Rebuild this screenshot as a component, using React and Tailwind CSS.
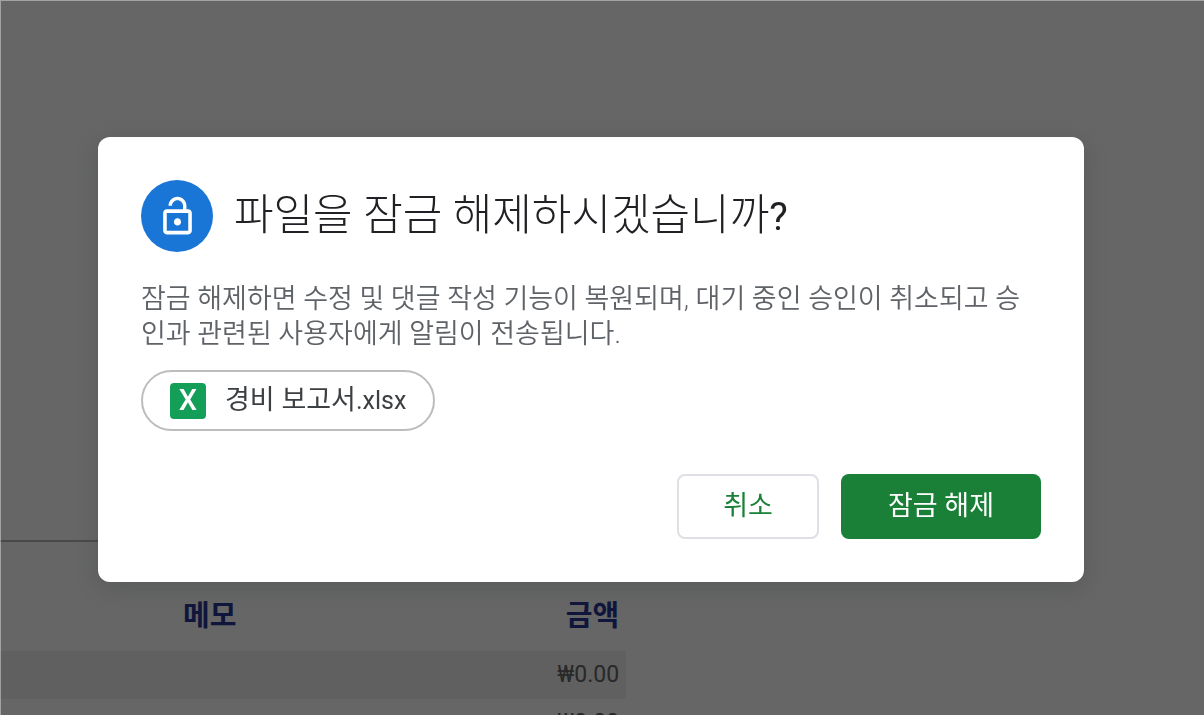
import { MdLockOpen } from 'react-icons/md';

const rows = ['₩0.00', '₩0.00'];

function ExpenseTable() {
  return (
    <main className="h-screen overflow-hidden bg-white pt-[540px]">
      <table className="w-[52%] border-collapse border-t-2 border-[#b7b7b7]">
        <thead>
          <tr className="h-[110px] text-[29px] font-bold text-[#283593]">
            <th className="pt-10 pl-[183px] text-left">메모</th>
            <th className="pt-10 pr-[7px] text-right">금액</th>
          </tr>
        </thead>
        <tbody>
          {rows.map((amount, i) => (
            <tr key={i} className="h-12 text-[23px] leading-8 text-[#666666] odd:bg-[#efefef]">
              <td></td>
              <td className="pr-[7px] text-right">{amount}</td>
            </tr>
          ))}
        </tbody>
      </table>
    </main>
  );
}

function UnlockDialog() {
  return (
    <div className="fixed inset-0 flex items-start border-t border-l border-white/40 bg-black/60 pt-[136px] pr-[120px] pl-[97px]">
      <section
        role="dialog"
        aria-modal="true"
        aria-labelledby="dialog-title"
        className="w-full rounded-xl bg-white p-[43px] shadow-[0_6px_24px_2px_rgba(60,64,67,0.3)]"
      >
        <header className="flex items-center gap-[21px]">
          <div className="flex size-[72px] shrink-0 items-center justify-center rounded-full bg-[#1976d7] text-white">
            <MdLockOpen size={43} />
          </div>
          <h1 id="dialog-title" className="text-[43px] leading-[60px] font-light text-[#202124]">
            파일을 잠금 해제하시겠습니까<span className="text-[39px] font-normal">?</span>
          </h1>
        </header>

        <p className="mt-[30px] text-[27px] leading-[35px] font-[350] text-[#5f6368]">
          잠금 해제하면 수정 및 댓글 작성 기능이 복원되며, 대기 중인 승인이 취소되고 승인과 관련된 사용자에게 알림이 전송됩니다.
        </p>

        <div className="mt-[18px] flex h-[61px] w-fit items-center gap-[19px] rounded-full border-2 border-[#bdbdbd] px-[27px]">
          <span className="flex size-9 items-center justify-center rounded bg-[#149f58] text-[29px] font-medium text-white">X</span>
          <span className="text-[27px] leading-[35px] text-[#3c4043]">
            경비 보고서<span className="text-[25px]">.xlsx</span>
          </span>
        </div>

        <footer className="mt-[43px] flex justify-end gap-[22px]">
          <button className="h-[65px] rounded-lg border-2 border-[#dfe0e6] px-11 text-[27px] text-[#1a8038]">취소</button>
          <button className="h-[65px] rounded-lg bg-[#1a8038] px-[47px] text-[27px] text-white">잠금 해제</button>
        </footer>
      </section>
    </div>
  );
}

export default function App() {
  return (
    <div lang="ko" className="font-[Roboto,'Noto_Sans_CJK_KR',sans-serif]">
      <ExpenseTable />
      <UnlockDialog />
    </div>
  );
}
